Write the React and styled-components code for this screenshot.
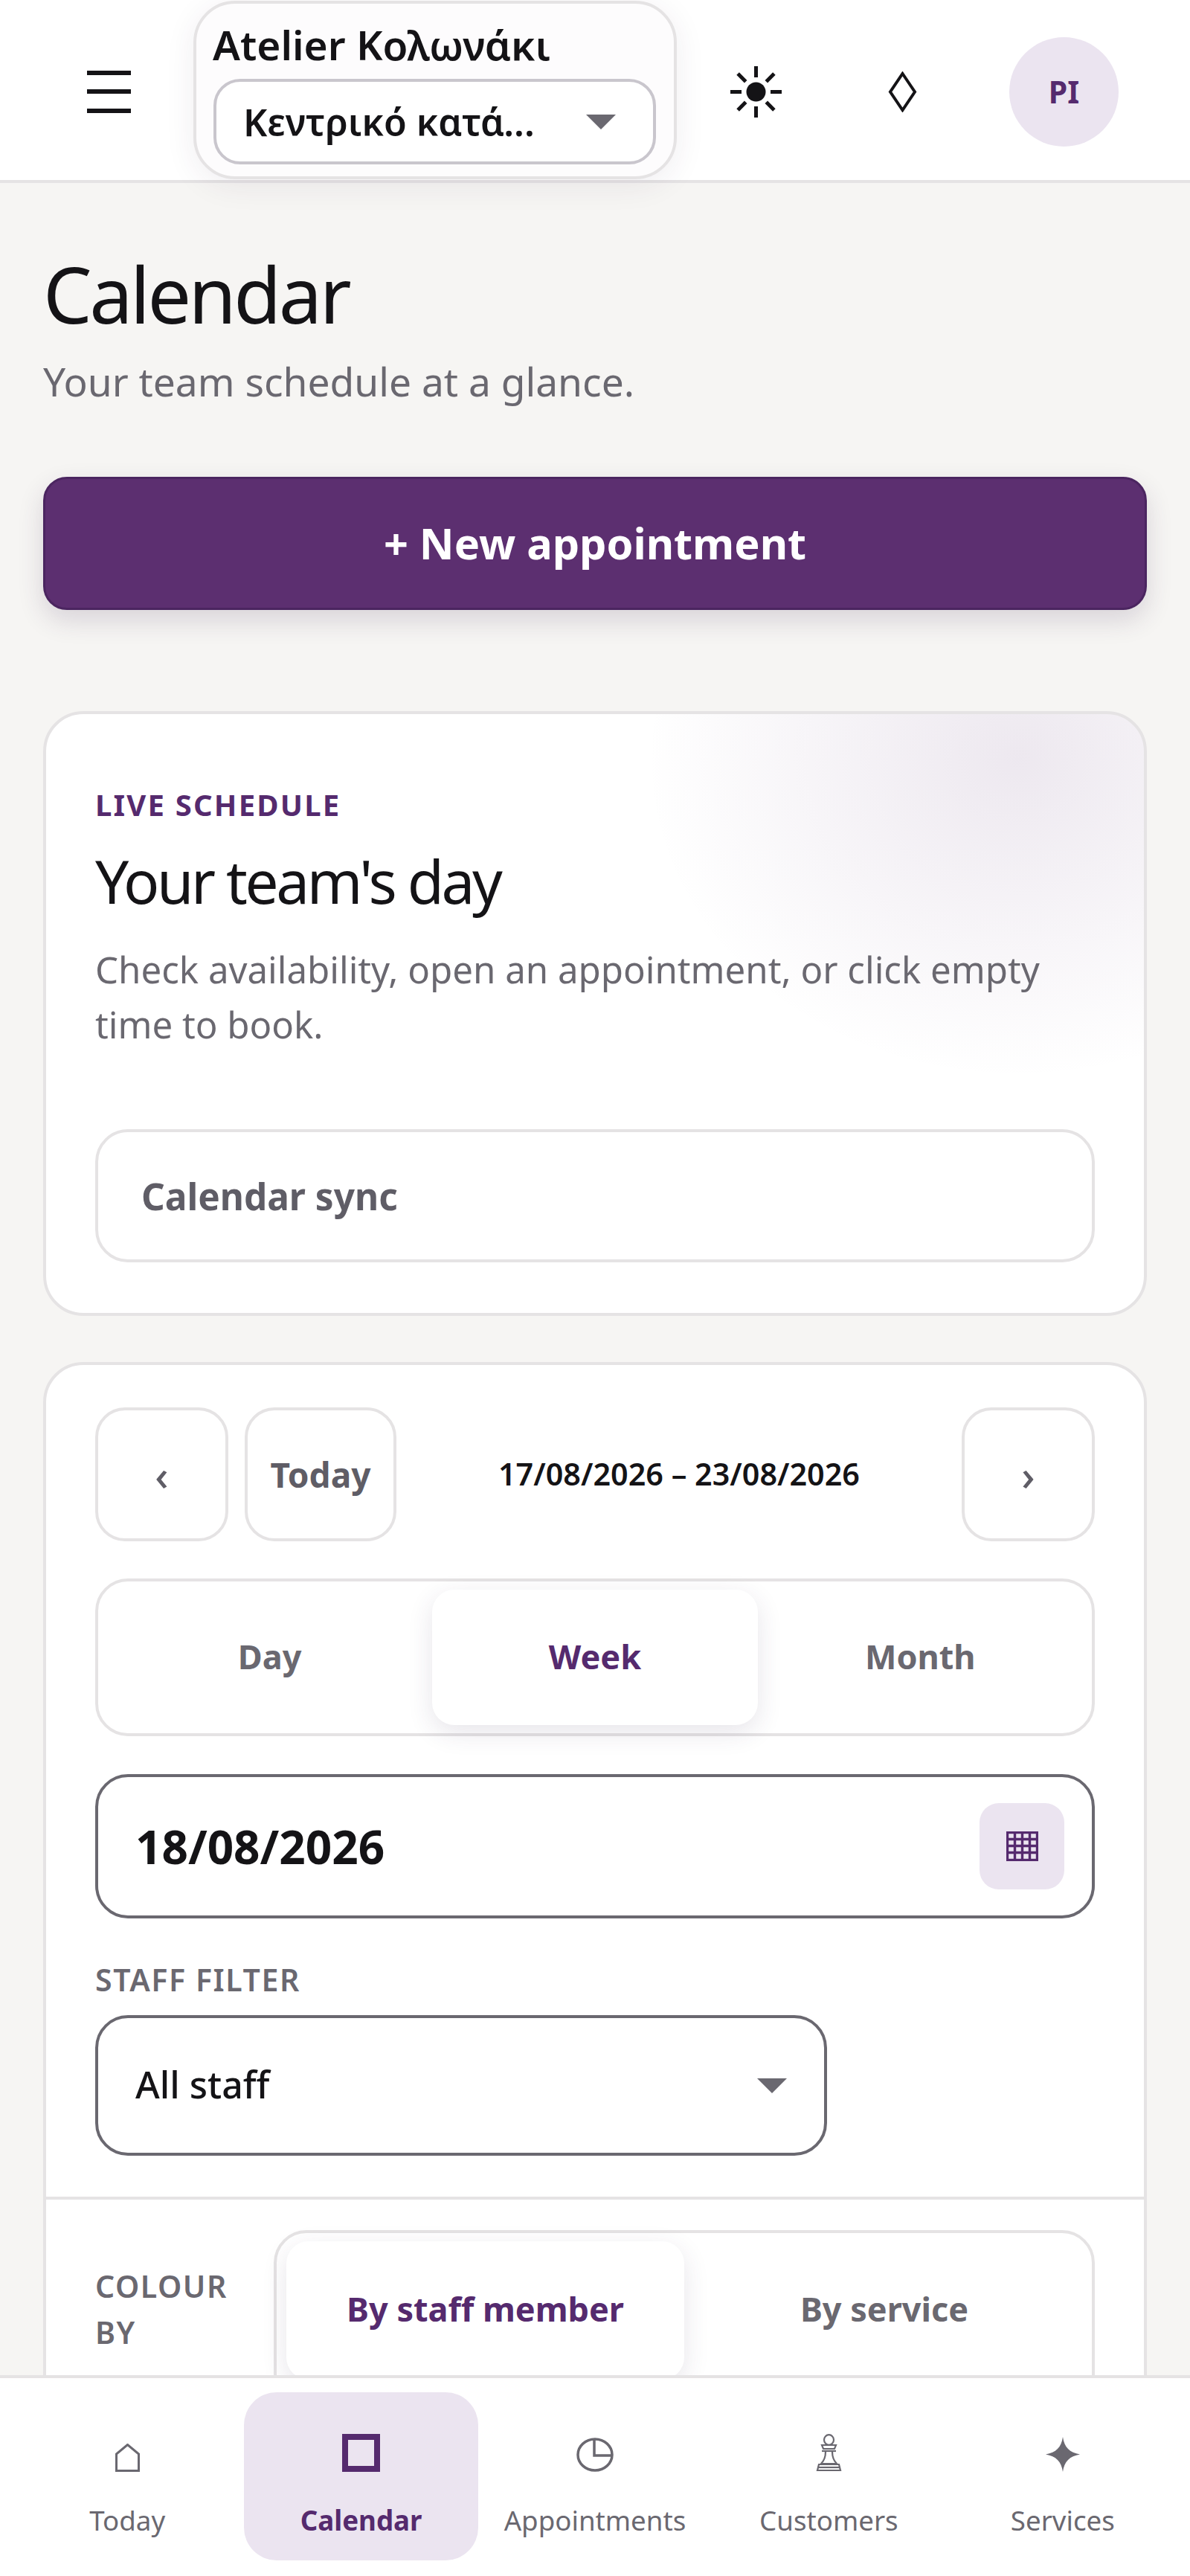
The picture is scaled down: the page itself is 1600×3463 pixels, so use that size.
import React from "react";
import styled, { createGlobalStyle } from "styled-components";

const purple = "#552a6e";
const lavender = "#ebe4f0";
const grey = "#6a6870";
const line = "#e5e3e4";
const ink = "#141316";

const GlobalStyle = createGlobalStyle`
  html, body {
    margin: 0;
    padding: 0;
    background: #f6f5f3;
    font-family: "Noto Sans", "Open Sans", sans-serif;
    color: ${ink};
  }
  * { box-sizing: border-box; }
`;

const Page = styled.div`
  height: 3463px;
  overflow: hidden;
`;

const Header = styled.header`
  height: 246px;
  display: flex;
  align-items: center;
  padding-left: 73px;
  background: #fff;
  border-bottom: 4px solid ${line};
`;

const HeaderButton = styled.div`
  flex: none;
  width: 147px;
  height: 147px;
  margin-top: 4px;
  display: flex;
  align-items: center;
  justify-content: center;
  margin-left: ${(p) => p.$left || 0}px;
`;

const MenuBars = styled.div`
  width: 59px;
  height: 57px;
  display: flex;
  flex-direction: column;
  justify-content: space-between;
  span {
    height: 6px;
    background: ${ink};
  }
`;

const SitePill = styled.div`
  flex: none;
  width: 650px;
  height: 240px;
  margin-left: 40px;
  padding: 20px 24px 0 23px;
  background: #fdfcfd;
  border: 4px solid ${line};
  border-radius: 56px;
  box-shadow: 0 8px 40px rgba(60, 40, 80, 0.08);
`;

const SiteName = styled.div`
  margin-left: -1px;
  font-size: 55px;
  line-height: 70px;
  font-weight: 600;
  white-space: nowrap;
`;

const SiteSelect = styled.div`
  height: 115px;
  margin-top: 11px;
  display: flex;
  align-items: center;
  justify-content: space-between;
  padding: 0 50px 0 36px;
  background: #fff;
  border: 4px solid #c9c6cd;
  border-radius: 36px;
  font-size: 50px;
  font-weight: 600;
  white-space: nowrap;
`;

const Caret = styled.span`
  flex: none;
  width: 0;
  height: 0;
  border-left: 20px solid transparent;
  border-right: 20px solid transparent;
  border-top: 20px solid ${grey};
`;

const Avatar = styled(HeaderButton)`
  border-radius: 50%;
  background: ${lavender};
  color: ${purple};
  font-size: 41px;
  font-weight: 700;
`;

const Main = styled.main`
  padding: 0 58px;
`;

const Title = styled.h1`
  margin: 88px 0 0;
  font-size: 104px;
  line-height: 122px;
  font-weight: 400;
  letter-spacing: -3.5px;
`;

const Subtitle = styled.p`
  margin: 21px 0 0;
  font-size: 53.3px;
  line-height: 72px;
  color: ${grey};
`;

const PrimaryButton = styled.div`
  height: 179px;
  margin-top: 92px;
  padding-bottom: 2px;
  display: flex;
  align-items: center;
  justify-content: center;
  background: #5c2f70;
  border: 3px solid #4b2560;
  border-radius: 32px;
  color: #fff;
  font-size: 57.6px;
  font-weight: 700;
  box-shadow: 0 14px 34px rgba(60, 40, 80, 0.16);
`;

const Card = styled.section`
  margin-top: ${(p) => p.$top}px;
  background: #fff;
  border: 4px solid ${line};
  border-radius: 54px;
`;

const IntroCard = styled(Card)`
  height: 813px;
  padding: 97px 66px 0;
  background:
    radial-gradient(ellipse 500px 430px at calc(100% - 170px) 60px, rgba(92, 47, 112, 0.11), rgba(92, 47, 112, 0) 100%),
    #fff;
`;

const Eyebrow = styled.div`
  font-size: 40px;
  line-height: 50px;
  font-weight: 700;
  letter-spacing: 2.2px;
  color: ${purple};
`;

const CardTitle = styled.h2`
  margin: 27px 0 0;
  font-size: 80px;
  line-height: 100px;
  font-weight: 400;
  letter-spacing: -3.4px;
`;

const CardText = styled.p`
  margin: 32px 0 0;
  font-size: 49.2px;
  line-height: 74px;
  color: ${grey};
`;

const SyncBox = styled.div`
  height: 179px;
  margin-top: 104px;
  display: flex;
  align-items: center;
  padding: 0 58px;
  border: 4px solid ${line};
  border-radius: 44px;
  font-size: 49.5px;
  font-weight: 700;
  color: #5f5d66;
`;

const ControlsCard = styled(Card)`
  height: 1600px;
`;

const ControlsTop = styled.div`
  padding: 57px 66px 0;
  height: 1122px;
  border-bottom: 4px solid ${line};
`;

const RangeRow = styled.div`
  display: flex;
  align-items: stretch;
  gap: 22px;
  height: 180px;
`;

const RangeButton = styled.div`
  flex: none;
  width: ${(p) => p.$w}px;
  display: flex;
  align-items: center;
  justify-content: center;
  border: 4px solid ${line};
  border-radius: 40px;
  font-size: 46px;
  font-weight: 700;
  color: #5f5d66;
`;

const ArrowButton = styled(RangeButton)`
  font-size: 56px;
  font-weight: 500;
`;

const RangeLabel = styled.div`
  flex: 1;
  text-align: center;
  padding-top: 60px;
  font-size: 41.3px;
  line-height: 58px;
  font-weight: 600;
  white-space: nowrap;
`;

const Segmented = styled.div`
  height: 212px;
  margin-top: 50px;
  display: grid;
  grid-template-columns: 1fr 1fr 1fr;
  padding: 11px 12px;
  border: 4px solid ${line};
  border-radius: 44px;
`;

const Segment = styled.div`
  display: flex;
  align-items: center;
  justify-content: center;
  padding-bottom: 4px;
  font-size: 45px;
  font-weight: 700;
  border-radius: 30px;
  color: ${(p) => (p.$active ? purple : grey)};
  background: ${(p) => (p.$active ? "#fff" : "transparent")};
  box-shadow: ${(p) => (p.$active ? "0 10px 34px rgba(60, 40, 80, 0.12)" : "none")};
`;

const DateField = styled.div`
  height: 194px;
  margin-top: 51px;
  display: flex;
  align-items: center;
  justify-content: space-between;
  padding: 0 37px 0 50px;
  border: 4px solid ${grey};
  border-radius: 44px;
  font-size: 62px;
  font-weight: 700;
`;

const DateIcon = styled.div`
  width: 114px;
  height: 116px;
  display: flex;
  align-items: center;
  justify-content: center;
  background: ${lavender};
  border-radius: 26px;
`;

const FieldLabel = styled.div`
  margin-top: 54px;
  font-size: 41px;
  line-height: 56px;
  font-weight: 600;
  letter-spacing: 1.6px;
  color: ${grey};
`;

const StaffSelect = styled.div`
  width: 984px;
  height: 189px;
  margin-top: 20px;
  display: flex;
  align-items: center;
  justify-content: space-between;
  padding: 0 50px;
  border: 4px solid ${grey};
  border-radius: 44px;
  font-size: 50px;
  font-weight: 500;
  span:first-child {
    margin-bottom: 4px;
  }
`;

const ColourRow = styled.div`
  display: flex;
  align-items: flex-start;
  padding: 41px 66px 0;
`;

const ColourLabel = styled.div`
  flex: none;
  width: 240px;
  padding: 44px 40px 0 0;
  font-size: 41px;
  line-height: 62px;
  font-weight: 600;
  letter-spacing: 1.6px;
  color: ${grey};
`;

const ColourToggle = styled.div`
  flex: 1;
  height: 300px;
  display: grid;
  grid-template-columns: 535px 1fr;
  padding: 11px 10px 0 13px;
  border: 4px solid ${line};
  border-radius: 44px;
`;

const ColourOption = styled(Segment)`
  height: 186px;
  padding-bottom: 6px;
`;

const BottomNav = styled.nav`
  position: fixed;
  left: 0;
  right: 0;
  bottom: 0;
  height: 270px;
  display: grid;
  grid-template-columns: repeat(5, 1fr);
  padding: 19px 14px 0;
  background: #fff;
  border-top: 4px solid ${line};
`;

const NavItem = styled.div`
  height: 226px;
  display: flex;
  flex-direction: column;
  align-items: center;
  padding-top: 56px;
  border-radius: 44px;
  font-size: 36.7px;
  line-height: 52px;
  font-weight: ${(p) => (p.$active ? 700 : 400)};
  color: ${(p) => (p.$active ? purple : grey)};
  background: ${(p) => (p.$active ? lavender : "transparent")};
`;

const NavIcon = styled.div`
  height: 51px;
  margin-bottom: 39px;
  display: flex;
  align-items: flex-end;
`;

function SunIcon() {
  const rays = [0, 45, 90, 135, 180, 225, 270, 315];
  return (
    <svg width="73" height="73" viewBox="0 0 73 73">
      <circle cx="36.5" cy="36.5" r="13" fill={ink} />
      {rays.map((deg) => (
        <line
          key={deg}
          x1="36.5"
          y1="2"
          x2="36.5"
          y2="17"
          stroke={ink}
          strokeWidth="5"
          transform={`rotate(${deg} 36.5 36.5)`}
        />
      ))}
    </svg>
  );
}

function DiamondIcon() {
  return (
    <svg width="39" height="55" viewBox="0 0 39 55">
      <path d="M19.5 3 L36 27.5 L19.5 52 L3 27.5 Z" fill="none" stroke={ink} strokeWidth="4" />
    </svg>
  );
}

function GridIcon() {
  return (
    <svg width="43" height="40" viewBox="0 0 43 40" fill="none" stroke={purple} strokeWidth="3.4">
      <rect x="1.5" y="1.5" width="40" height="37" />
      <path d="M1.5 10.5 H41.5 M1.5 19.5 H41.5 M1.5 28.5 H41.5 M11.5 1.5 V38.5 M21.5 1.5 V38.5 M31.5 1.5 V38.5" />
    </svg>
  );
}

function HouseIcon() {
  return (
    <svg width="33" height="38" viewBox="0 0 33 38">
      <path d="M1.5 36.5 V14 L16.5 1.5 L31.5 14 V36.5 Z" fill="none" stroke={grey} strokeWidth="3" />
    </svg>
  );
}

function SquareIcon() {
  return (
    <svg width="51" height="51" viewBox="0 0 51 51">
      <rect x="4" y="4" width="43" height="43" fill="none" stroke={purple} strokeWidth="8" />
    </svg>
  );
}

function ClockIcon() {
  return (
    <svg width="50" height="46" viewBox="0 0 50 46" fill="none" stroke={grey} strokeWidth="3.5">
      <ellipse cx="25" cy="23" rx="23" ry="21" />
      <path d="M24 2 V24 H48" />
    </svg>
  );
}

function ChessIcon() {
  return (
    <svg width="35" height="51" viewBox="0 0 35 51" fill="none" stroke={grey} strokeWidth="2.2">
      <ellipse cx="17.5" cy="8" rx="6.5" ry="6.8" />
      <path d="M8 15 H27 L25 20 H10 Z" />
      <path d="M8 23 H27" />
      <path d="M13 24 C13 32 11 36 7 40 H28 C24 36 22 32 22 24" />
      <path d="M4 41 H31 L33 49 H2 Z" />
      <path d="M2 45 H33" />
    </svg>
  );
}

function StarIcon() {
  return (
    <svg width="46" height="47" viewBox="0 0 46 47">
      <path d="M23 0 C25 14 32 21 46 23.5 C32 26 25 33 23 47 C21 33 14 26 0 23.5 C14 21 21 14 23 0 Z" fill={grey} />
    </svg>
  );
}

const navItems = [
  { label: "Today", icon: <HouseIcon /> },
  { label: "Calendar", icon: <SquareIcon />, active: true },
  { label: "Appointments", icon: <ClockIcon /> },
  { label: "Customers", icon: <ChessIcon /> },
  { label: "Services", icon: <StarIcon /> },
];

export default function App() {
  return (
    <Page>
      <GlobalStyle />
      <Header>
        <HeaderButton>
          <MenuBars>
            <span />
            <span />
            <span />
          </MenuBars>
        </HeaderButton>
        <SitePill>
          <SiteName>Atelier Κολωνάκι</SiteName>
          <SiteSelect>
            Κεντρικό κατά...
            <Caret />
          </SiteSelect>
        </SitePill>
        <HeaderButton $left={33}>
          <SunIcon />
        </HeaderButton>
        <HeaderButton $left={50}>
          <DiamondIcon />
        </HeaderButton>
        <Avatar $left={70}>PI</Avatar>
      </Header>

      <Main>
        <Title>Calendar</Title>
        <Subtitle>Your team schedule at a glance.</Subtitle>
        <PrimaryButton>+ New appointment</PrimaryButton>

        <IntroCard $top={136}>
          <Eyebrow>LIVE SCHEDULE</Eyebrow>
          <CardTitle>Your team's day</CardTitle>
          <CardText>Check availability, open an appointment, or click empty time to book.</CardText>
          <SyncBox>Calendar sync</SyncBox>
        </IntroCard>

        <ControlsCard $top={62}>
          <ControlsTop>
            <RangeRow>
              <ArrowButton $w={179}>‹</ArrowButton>
              <RangeButton $w={204}>Today</RangeButton>
              <RangeLabel>17/08/2026 – 23/08/2026</RangeLabel>
              <ArrowButton $w={179}>›</ArrowButton>
            </RangeRow>
            <Segmented>
              <Segment>Day</Segment>
              <Segment $active>Week</Segment>
              <Segment>Month</Segment>
            </Segmented>
            <DateField>
              18/08/2026
              <DateIcon>
                <GridIcon />
              </DateIcon>
            </DateField>
            <FieldLabel>STAFF FILTER</FieldLabel>
            <StaffSelect>
              <span>All staff</span>
              <Caret />
            </StaffSelect>
          </ControlsTop>
          <ColourRow>
            <ColourLabel>COLOUR BY</ColourLabel>
            <ColourToggle>
              <ColourOption $active>By staff member</ColourOption>
              <ColourOption>By service</ColourOption>
            </ColourToggle>
          </ColourRow>
        </ControlsCard>
      </Main>

      <BottomNav>
        {navItems.map((item) => (
          <NavItem key={item.label} $active={item.active}>
            <NavIcon>{item.icon}</NavIcon>
            {item.label}
          </NavItem>
        ))}
      </BottomNav>
    </Page>
  );
}
